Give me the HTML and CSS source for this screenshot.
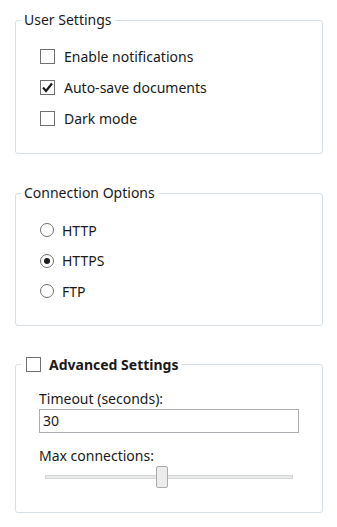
FILE: index.html
```html
<!doctype html>
<html>
<head>
    <title>Settings</title>
    <meta charset="utf-8">
    <link rel="stylesheet" href="styles.css">
</head>
<body>
    <!-- 用户设置 -->
    <fieldset class="group first">
        <legend>User Settings</legend>
        <div class="items">
            <div class="row"><span class="check"></span>Enable notifications</div>
            <div class="row"><span class="check"><svg width="13" height="13" viewBox="0 0 13 13"><path d="M2 6.5 L5 10 L11 2.5" fill="none" stroke="#1c1c1c" stroke-width="2.2"/></svg></span>Auto-save documents</div>
            <div class="row"><span class="check"></span>Dark mode</div>
        </div>
    </fieldset>

    <!-- 连接选项 -->
    <fieldset class="group">
        <legend>Connection Options</legend>
        <div class="items radios">
            <div class="row"><span class="radio"></span>HTTP</div>
            <div class="row"><span class="radio on"></span>HTTPS</div>
            <div class="row"><span class="radio"></span>FTP</div>
        </div>
    </fieldset>

    <!-- 高级设置 -->
    <fieldset class="group adv">
        <legend><span class="check"></span><b>Advanced Settings</b></legend>
        <div class="fields">
            <div class="label">Timeout (seconds):</div>
            <div class="textbox">30</div>
            <div class="label">Max connections:</div>
            <div class="slider">
                <div class="track"></div>
                <div class="thumb"></div>
            </div>
        </div>
    </fieldset>
</body>
</html>
```

FILE: styles.css
```css
body {
    margin: 0;
    padding: 0;
    background: #fff;
    color: #1a1a1a;
    font-family: "Noto Sans", "Open Sans", sans-serif;
    font-size: 14px;
}

.group {
    width: 296px;
    margin: 29px 0 0 15px;
    padding: 0 5px 18px 5px;
    border: 1px solid #d5dfe5;
    border-radius: 3px;
}

.group.first {
    margin-top: 10px;
    padding-bottom: 19px;
}

legend {
    padding: 0 3px;
    height: 20px;
    line-height: 20px;
}

.items {
    padding: 11px 0 0 19px;
}

.radios {
    padding-top: 12px;
}

.row {
    display: flex;
    align-items: center;
    height: 31px;
}

.radios .row {
    height: 30.5px;
}

.check {
    display: inline-flex;
    align-items: center;
    justify-content: center;
    box-sizing: border-box;
    width: 15px;
    height: 15px;
    border: 1px solid #707070;
    background: #fff;
    margin-right: 9px;
}

.radio {
    box-sizing: border-box;
    width: 14px;
    height: 14px;
    border: 1px solid #707070;
    border-radius: 50%;
    margin-right: 8px;
    position: relative;
}

.radio.on::after {
    content: "";
    position: absolute;
    left: 3px;
    top: 3px;
    width: 6px;
    height: 6px;
    border-radius: 50%;
    background: #1c1c1c;
}

.adv legend {
    display: flex;
    align-items: center;
    padding: 0 4px 0 5px;
    font-size: 14px;
}

.adv legend .check {
    margin-right: 8px;
}

.adv {
    padding-bottom: 24px;
}

.fields {
    padding: 14px 0 0 18px;
}

.label {
    height: 20px;
    line-height: 20px;
}

.textbox {
    box-sizing: border-box;
    width: 260px;
    height: 24px;
    line-height: 22px;
    padding-left: 3px;
    border: 1px solid #abadb3;
    margin-bottom: 13px;
}

.slider {
    position: relative;
    width: 260px;
    height: 22px;
}

.track {
    position: absolute;
    left: 6px;
    top: 9px;
    width: 248px;
    height: 4px;
    box-sizing: border-box;
    background: #e7eaea;
    border: 1px solid #d6d6d6;
}

.thumb {
    position: absolute;
    left: 117px;
    top: 0;
    width: 12px;
    height: 22px;
    box-sizing: border-box;
    background: #ececec;
    border: 1px solid #acacac;
    border-radius: 2px;
}
```
